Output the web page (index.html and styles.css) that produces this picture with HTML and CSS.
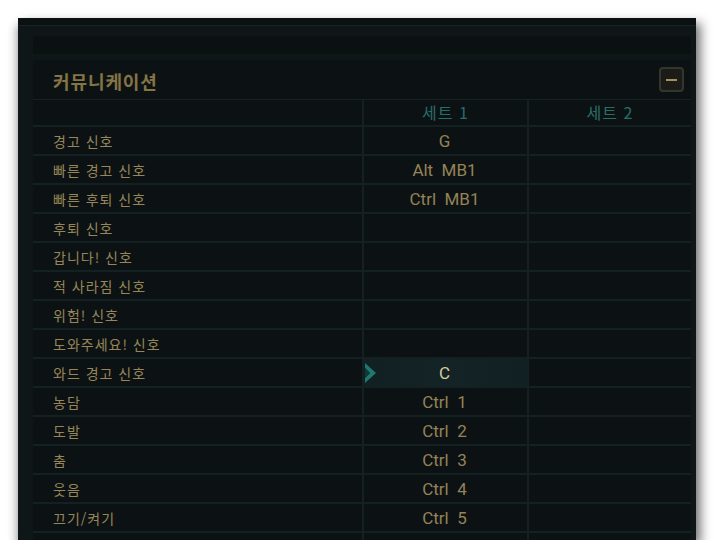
FILE: index.html
```html
<!DOCTYPE html>
<html lang="ko">

<head>
    <title>커뮤니케이션</title>
    <link rel="stylesheet" href="styles.css">
</head>

<body>
    <div class="shot">
        <div class="top-band"></div>
        <div class="frame">
            <div class="searchbar"></div>
            <div class="section">
                <div class="section-head">
                    <h2 class="title">커뮤니케이션</h2>
                    <button class="collapse" type="button"><span></span></button>
                </div>
                <div class="keys">
                    <div class="row head">
                        <div class="cell label"></div>
                        <div class="cell set">세트 1</div>
                        <div class="cell set">세트 2</div>
                    </div>
                    <div class="row">
                        <div class="cell label">경고 신호</div>
                        <div class="cell key">G</div>
                        <div class="cell key"></div>
                    </div>
                    <div class="row">
                        <div class="cell label">빠른 경고 신호</div>
                        <div class="cell key">Alt&nbsp; MB1</div>
                        <div class="cell key"></div>
                    </div>
                    <div class="row">
                        <div class="cell label">빠른 후퇴 신호</div>
                        <div class="cell key">Ctrl&nbsp; MB1</div>
                        <div class="cell key"></div>
                    </div>
                    <div class="row">
                        <div class="cell label">후퇴 신호</div>
                        <div class="cell key"></div>
                        <div class="cell key"></div>
                    </div>
                    <div class="row">
                        <div class="cell label">갑니다! 신호</div>
                        <div class="cell key"></div>
                        <div class="cell key"></div>
                    </div>
                    <div class="row">
                        <div class="cell label">적 사라짐 신호</div>
                        <div class="cell key"></div>
                        <div class="cell key"></div>
                    </div>
                    <div class="row">
                        <div class="cell label">위험! 신호</div>
                        <div class="cell key"></div>
                        <div class="cell key"></div>
                    </div>
                    <div class="row">
                        <div class="cell label">도와주세요! 신호</div>
                        <div class="cell key"></div>
                        <div class="cell key"></div>
                    </div>
                    <div class="row">
                        <div class="cell label">와드 경고 신호</div>
                        <div class="cell key active">
                            <svg class="marker" width="12" height="22" viewBox="0 0 12 22">
                                <polygon points="0,1 11,11 0,21 0,16 5,11 0,6" fill="#1f7771"/>
                                <polygon points="0,6 5,11 0,16" fill="#0f3a38"/>
                            </svg>
                            C
                        </div>
                        <div class="cell key"></div>
                    </div>
                    <div class="row">
                        <div class="cell label">농담</div>
                        <div class="cell key">Ctrl&nbsp; 1</div>
                        <div class="cell key"></div>
                    </div>
                    <div class="row">
                        <div class="cell label">도발</div>
                        <div class="cell key">Ctrl&nbsp; 2</div>
                        <div class="cell key"></div>
                    </div>
                    <div class="row">
                        <div class="cell label">춤</div>
                        <div class="cell key">Ctrl&nbsp; 3</div>
                        <div class="cell key"></div>
                    </div>
                    <div class="row">
                        <div class="cell label">웃음</div>
                        <div class="cell key">Ctrl&nbsp; 4</div>
                        <div class="cell key"></div>
                    </div>
                    <div class="row">
                        <div class="cell label">끄기/켜기</div>
                        <div class="cell key">Ctrl&nbsp; 5</div>
                        <div class="cell key"></div>
                    </div>
                    <div class="row">
                        <div class="cell label"></div>
                        <div class="cell key"></div>
                        <div class="cell key"></div>
                    </div>
                </div>
            </div>
        </div>
    </div>
</body>

</html>
```

FILE: styles.css
```css
body {
    margin: 0;
    background-color: white;
    font-family: "Noto Sans CJK KR", "Noto Sans", sans-serif;
}

.shot {
    margin: 18px 0 0 18px;
    width: 678px;
    height: 522px;
    overflow: hidden;
    background-color: #0f1617;
    box-shadow: 5px 5px 10px rgba(0, 0, 0, 0.5), -3px 8px 8px rgba(0, 0, 0, 0.22);
}

.top-band {
    height: 7px;
    background-color: #0b1011;
    border-bottom: 1px solid #182325;
}

.frame {
    padding: 10px 5px 0 15px;
}

.searchbar {
    height: 18px;
    background-color: #0b1011;
    border-radius: 3px;
    margin-bottom: 6px;
}

.section {
    background-color: #0c1213;
    border-radius: 3px 3px 0 0;
}

.section-head {
    height: 39px;
    display: flex;
    align-items: center;
    justify-content: space-between;
    padding: 0 7px 0 20px;
    border-bottom: 1px solid #152224;
}

.title {
    margin: 2px 0 0 0;
    font-size: 18px;
    font-weight: bold;
    letter-spacing: 0.9px;
    color: #857446;
}

.collapse {
    width: 25px;
    height: 25px;
    padding: 0;
    background-color: #1b1c18;
    border: 2px solid #34352f;
    border-radius: 4px;
    display: flex;
    align-items: center;
    justify-content: center;
}

.collapse span {
    width: 11px;
    height: 2px;
    background-color: #a6915a;
}

.row {
    display: grid;
    grid-template-columns: 329px 165px 1fr;
    height: 29px;
    box-sizing: border-box;
    border-bottom: 2px solid #142122;
}

.row.head {
    height: 27px;
}

.cell {
    display: flex;
    align-items: center;
    justify-content: center;
    position: relative;
}

.cell + .cell {
    border-left: 2px solid #142122;
}

.label {
    justify-content: flex-start;
    padding-left: 20px;
    font-size: 14px;
    letter-spacing: 1px;
    color: #978659;
}

.set {
    font-size: 16px;
    letter-spacing: 1px;
    color: #286e68;
    padding-bottom: 1px;
}

.key {
    font-family: Roboto, "Liberation Sans", sans-serif;
    font-size: 17px;
    color: #948358;
    padding-right: 2px;
}

.key.active {
    background: linear-gradient(to right, #112022, #142426 50%, #112022);
    color: #d8cc9c;
}

.marker {
    position: absolute;
    left: 1px;
    top: 3px;
}
```
